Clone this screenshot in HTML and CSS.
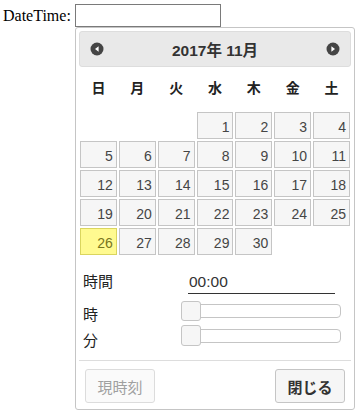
FILE: index.html
```html
<!DOCTYPE html>
<html lang="ja">
<head>
    <meta charset="UTF-8">
    <meta name="viewport" content="width=device-width, initial-scale=1.0">
    <title>DateTime Picker</title>
    <link rel="stylesheet" href="styles.css">
</head>
<body>

    <div class="field">
        <label for="dateTime">DateTime:</label>
        <input type="text" id="dateTime" class="dt-input" />
    </div>

    <!-- Picker popup -->
    <div class="picker">
        <div class="picker-header">
            <a class="nav" title="前">
                <svg width="14" height="14" viewBox="0 0 14 14"><circle cx="7" cy="7" r="6.5" fill="#454545"/><path d="M8.6 4.2 L5 7 L8.6 9.8 Z" fill="#fff"/></svg>
            </a>
            <div class="title">2017年 11月</div>
            <a class="nav" title="次">
                <svg width="14" height="14" viewBox="0 0 14 14"><circle cx="7" cy="7" r="6.5" fill="#454545"/><path d="M5.4 4.2 L9 7 L5.4 9.8 Z" fill="#fff"/></svg>
            </a>
        </div>

        <div class="dow-row">
            <span>日</span><span>月</span><span>火</span><span>水</span><span>木</span><span>金</span><span>土</span>
        </div>

        <div class="days">
            <span class="empty"></span>
            <span class="empty"></span>
            <span class="empty"></span>
            <a class="day">1</a>
            <a class="day">2</a>
            <a class="day">3</a>
            <a class="day">4</a>
            <a class="day">5</a>
            <a class="day">6</a>
            <a class="day">7</a>
            <a class="day">8</a>
            <a class="day">9</a>
            <a class="day">10</a>
            <a class="day">11</a>
            <a class="day">12</a>
            <a class="day">13</a>
            <a class="day">14</a>
            <a class="day">15</a>
            <a class="day">16</a>
            <a class="day">17</a>
            <a class="day">18</a>
            <a class="day">19</a>
            <a class="day">20</a>
            <a class="day">21</a>
            <a class="day">22</a>
            <a class="day">23</a>
            <a class="day">24</a>
            <a class="day">25</a>
            <a class="day today">26</a>
            <a class="day">27</a>
            <a class="day">28</a>
            <a class="day">29</a>
            <a class="day">30</a>
        </div>

        <!-- Time section -->
        <dl class="time">
            <dt class="time-label">時間</dt>
            <dd><input type="text" class="time-input" value="00:00" /></dd>
            <dt class="hour-label">時</dt>
            <dd><div class="slider hour"><span class="handle"></span></div></dd>
            <dt class="minute-label">分</dt>
            <dd><div class="slider minute"><span class="handle"></span></div></dd>
        </dl>

        <div class="buttons">
            <button class="btn btn-disabled" disabled>現時刻</button>
            <button class="btn btn-primary">閉じる</button>
        </div>
    </div>

</body>
</html>
```

FILE: styles.css
```css
* {
    box-sizing: border-box;
}

body {
    margin: 0;
    font-family: 'Liberation Serif', serif;
    font-size: 16px;
    color: #000;
    background: #fff;
}

.field {
    display: flex;
    align-items: center;
    gap: 4px;
    padding: 4px 0 0 3px;
}

.dt-input {
    width: 146px;
    height: 23px;
    border: 1px solid #7a7a7a;
    padding: 0 3px;
    margin: 0;
    font-size: 14px;
}

.picker {
    position: absolute;
    left: 75px;
    top: 27px;
    width: 280px;
    height: 383px;
    padding: 3px 3px 0;
    border: 1px solid #c5c5c5;
    border-radius: 3px;
    background: #fff;
    font-family: 'Liberation Sans', 'Noto Sans CJK JP', sans-serif;
    color: #333;
}

.picker-header {
    height: 36px;
    display: flex;
    align-items: center;
    justify-content: space-between;
    padding: 0 10px;
    border: 1px solid #ddd;
    border-radius: 3px;
    background: #e9e9e9;
}

.nav {
    display: flex;
    cursor: pointer;
}

.title {
    font-size: 15.5px;
    font-weight: bold;
    color: #333;
}

.dow-row,
.days {
    display: grid;
    grid-template-columns: repeat(7, 1fr);
    gap: 2px;
    padding: 0 1px;
}

.dow-row {
    margin-top: 3px;
    height: 36px;
}

.dow-row span {
    line-height: 36px;
    text-align: center;
    font-size: 14px;
    font-weight: bold;
    color: #222;
}

.days {
    margin-top: 6px;
}

.day {
    height: 27px;
    padding: 4px 3px 0 0;
    border: 1px solid #c5c5c5;
    background: #f6f6f6;
    color: #454545;
    font-size: 14px;
    line-height: 21px;
    text-align: right;
    cursor: pointer;
}

.day.today {
    background: #fffa90;
    border-color: #dad55e;
    color: #777620;
}

.time {
    display: grid;
    grid-template-columns: 105px 1fr;
    grid-template-rows: 28px 25px 26px;
    margin: 13px 0 0;
    padding-left: 4px;
    font-size: 15px;
}

.time dt {
    color: #222;
    line-height: 20px;
}

.time dd {
    margin: 0 10px 0 0;
}

.time-label {
    padding-top: 4px;
}

.hour-label {
    padding-top: 9px;
}

.minute-label {
    padding-top: 10px;
}

.time-input {
    width: 147px;
    height: 26px;
    padding: 2px 0 0 1px;
    margin: 0;
    border: none;
    border-bottom: 1px solid #333;
    font-family: inherit;
    font-size: 15.5px;
    color: #333;
}

.slider {
    position: relative;
    height: 14px;
    margin-top: 8px;
    border: 1px solid #c5c5c5;
    border-radius: 4px;
    background: #fff;
}

.handle {
    position: absolute;
    left: -8px;
    top: -4px;
    width: 20px;
    height: 20px;
    border: 1px solid #c5c5c5;
    border-radius: 3px;
    background: #f6f6f6;
}

.minute .handle {
    height: 21px;
    top: -5px;
}

.buttons {
    display: flex;
    justify-content: space-between;
    margin-top: 13px;
    padding: 0 3px;
    border-top: 1px solid #ddd;
}

.btn {
    width: 70px;
    height: 34px;
    margin: 8px 3px 6px;
    border: 1px solid #c5c5c5;
    border-radius: 3px;
    background: #f6f6f6;
    color: #333;
    font-family: inherit;
    font-size: 15px;
    cursor: pointer;
}

.btn-disabled {
    border-color: #dcdcdc;
    background: #fafafa;
    color: #a0a0a0;
    cursor: default;
}

.btn-primary {
    font-weight: bold;
}
```
